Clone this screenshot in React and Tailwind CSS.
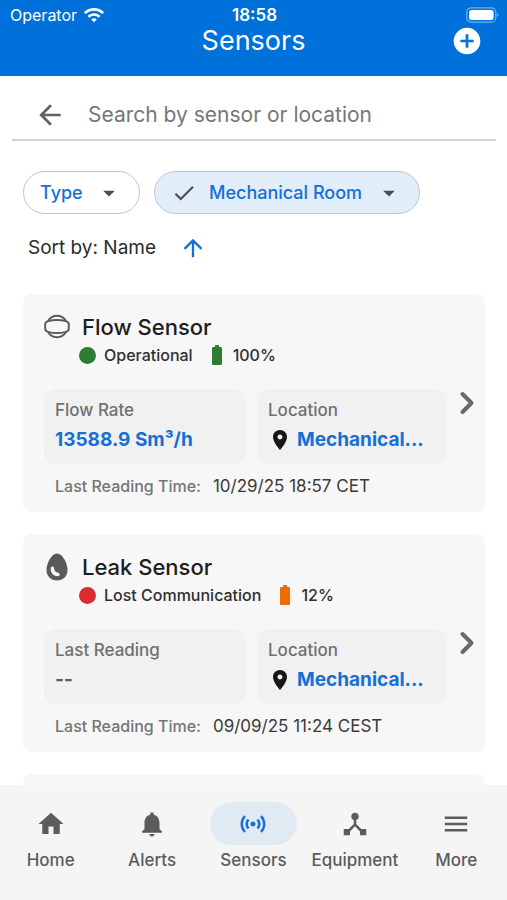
import React from "react";
import {
  MdAddCircle,
  MdArrowBack,
  MdArrowDropDown,
  MdArrowUpward,
  MdBatteryFull,
  MdCheck,
  MdDeviceHub,
  MdHome,
  MdLocationOn,
  MdMenu,
  MdNotifications,
  MdSensors,
  MdWifi,
} from "react-icons/md";

const sensors = [
  {
    name: "Flow Sensor",
    icon: FlowIcon,
    status: "Operational",
    dot: "bg-[#2e7d32]",
    battery: "100%",
    batteryColor: "text-[#2e7d32]",
    label: "Flow Rate",
    value: "13588.9 Sm³/h",
    valueColor: "text-[#1470d6]",
    location: "Mechanical...",
    time: "10/29/25 18:57 CET",
  },
  {
    name: "Leak Sensor",
    icon: LeakIcon,
    status: "Lost Communication",
    dot: "bg-[#d92d2f]",
    battery: "12%",
    batteryColor: "text-[#ef6c00]",
    label: "Last Reading",
    value: "--",
    valueColor: "text-[#5f5f5f]",
    location: "Mechanical...",
    time: "09/09/25 11:24 CEST",
  },
];

const tabs = [
  { name: "Home", icon: MdHome },
  { name: "Alerts", icon: MdNotifications },
  { name: "Sensors", icon: MdSensors, active: true },
  { name: "Equipment", icon: MdDeviceHub },
  { name: "More", icon: MdMenu },
];

function FlowIcon() {
  return (
    <svg viewBox="0 0 26 26" className="w-[26px] h-[26px] shrink-0" fill="none" stroke="#5a5a5a" strokeWidth="1.9">
      <path d="M4 7C6 3.600 9.200 1.800 13 1.800S20 3.600 22 7" />
      <path d="M4 18c2 3.400 5.200 5.200 9 5.200s7-1.800 9-5.200" />
      <path d="M4 7.200c6-1.600 12-1.600 18 0 1.700.5 2.800 1.600 2.800 3.300v4c0 1.700-1.100 2.800-2.800 3.300-6 1.600-12 1.600-18 0-1.700-.5-2.800-1.600-2.800-3.300v-4c0-1.700 1.100-2.800 2.800-3.300z" />
    </svg>
  );
}

function LeakIcon() {
  return (
    <svg viewBox="0 0 26 28" className="w-[26px] h-7 shrink-0">
      <path d="M13 .5C18.500 .5 23.500 10 23.500 17c0 6.200-4.300 10.500-10.500 10.500S2.500 23.200 2.500 17C2.500 10 7.500 .5 13 .5z" fill="#5a5a5a" />
      <path d="M7 14.200c.8-1 2.800-.7 3 .8.300 2.800 1.500 4.200 4.300 4.800 1.800.4 1.900 2.900.2 3.300C10 23.800 5.600 19.500 7 14.200z" fill="#f7f7f7" />
    </svg>
  );
}

function Chip({ label, selected }) {
  return (
    <label
      className={
        "flex items-center h-[43px] rounded-full border border-[#c3c3cc] px-4 " +
        (selected ? "bg-[#e1edf8]" : "bg-white")
      }
    >
      {selected && <MdCheck className="w-[26px] h-[26px] mr-3 text-[#4d4d4d]" />}
      <select
        aria-label={label}
        className="appearance-none bg-transparent text-[18px] leading-6 font-medium text-[#1470d6] outline-none"
      >
        <option>{label}</option>
      </select>
      <MdArrowDropDown className="w-7 h-7 ml-3 text-[#4d4d4d] pointer-events-none" />
    </label>
  );
}

function SensorCard({ sensor }) {
  const Icon = sensor.icon;
  return (
    <article className="flex items-center rounded-lg bg-[#f7f7f7] pl-[21px] pr-[7px]">
      <div className="flex-1 min-w-0 pt-4 pb-2">
        <div className="flex items-center gap-3 h-[34px]">
          <Icon />
          <h2 className="text-[22px] leading-8 font-medium text-[#1d1d1d]">{sensor.name}</h2>
        </div>
        <div className="flex items-center h-[22px] pl-[35px] text-base font-medium text-[#2f2f2f]">
          <span className={"w-[17px] h-[17px] rounded-full mr-2 " + sensor.dot} />
          <span>{sensor.status}</span>
          <MdBatteryFull className={"w-6 h-6 ml-3 mr-1 " + sensor.batteryColor} />
          <span>{sensor.battery}</span>
        </div>
        <div className="grid grid-cols-[202fr_190fr] gap-[11px] mt-[23px] mr-[9px]">
          <div className="rounded-xl bg-[#f1f1f1] h-[75px] px-[11px] pt-[7px]">
            <p className="text-[17px] leading-7 font-medium text-[#707070]">{sensor.label}</p>
            <p className={"text-[19px] leading-8 font-bold whitespace-nowrap " + sensor.valueColor}>
              {sensor.value}
            </p>
          </div>
          <div className="rounded-xl bg-[#f1f1f1] h-[75px] px-[11px] pt-[7px] min-w-0">
            <p className="text-[17px] leading-7 font-medium text-[#707070]">Location</p>
            <div className="flex items-center gap-[5px]">
              <MdLocationOn className="w-6 h-6 shrink-0 text-[#161616]" />
              <a href="#location" className="text-[19px] leading-8 font-bold whitespace-nowrap text-[#1470d6]">
                {sensor.location}
              </a>
            </div>
          </div>
        </div>
        <div className="flex items-center h-9 mt-1 pl-[11px] gap-3">
          <span className="text-base leading-6 font-medium text-[#757575]">Last Reading Time:</span>
          <span className="text-[17px] leading-6 text-[#3a3a3a]">{sensor.time}</span>
        </div>
      </div>
      <button aria-label={"Open " + sensor.name} className="w-[22px] h-8 shrink-0 flex items-center justify-center">
        <svg viewBox="0 0 16 24" className="w-4 h-6" fill="none" stroke="#6a6a6a" strokeWidth="4" strokeLinecap="round" strokeLinejoin="round">
          <path d="M3.500 3l9 9-9 9" />
        </svg>
      </button>
    </article>
  );
}

export default function App() {
  return (
    <div className="flex flex-col h-screen overflow-hidden bg-white font-['Inter',sans-serif]">
      <header className="bg-[#0070da] text-white pb-[22px]">
        <div className="grid grid-cols-3 items-center h-7 pt-[2px] pl-[10px] pr-2">
          <div className="flex items-center gap-[6px] text-base leading-5">
            <span>Operator</span>
            <MdWifi className="w-[22px] h-[22px]" />
          </div>
          <span className="text-center text-[17px] leading-5 font-semibold">18:58</span>
          <svg viewBox="0 0 33 16" className="w-[33px] h-4 justify-self-end">
            <rect x=".8" y=".8" width="29" height="14.400" rx="4.500" fill="none" stroke="#fff" strokeOpacity=".45" strokeWidth="1.200" />
            <rect x="3" y="3" width="24.600" height="10" rx="2.500" fill="#fff" />
            <path d="M31.200 6v4c1.600-.5 1.600-3.500 0-4z" fill="#fff" fillOpacity=".5" />
          </svg>
        </div>
        <div className="grid grid-cols-[1fr_auto_1fr] items-center h-[26px] pl-6 pr-6">
          <h1 className="col-start-2 text-[27px] leading-6">Sensors</h1>
          <button aria-label="Add sensor" className="justify-self-end -my-1">
            <MdAddCircle className="w-8 h-8" />
          </button>
        </div>
      </header>

      <main className="flex-1 min-h-0 overflow-hidden">
        <div className="flex items-center h-[65px] ml-3 mr-[11px] pt-[14px] pl-[22px] border-b-2 border-[#d2d2d2]">
          <button aria-label="Back">
            <MdArrowBack className="w-8 h-8 text-[#5f6164]" />
          </button>
          <input
            type="search"
            aria-label="Search by sensor or location"
            placeholder="Search by sensor or location"
            className="flex-1 min-w-0 ml-[22px] text-[21px] leading-8 text-[#333] placeholder:text-[#75777a] outline-none"
          />
        </div>

        <div className="flex gap-[14px] mt-[30px] px-[23px]">
          <Chip label="Type" />
          <Chip label="Mechanical Room" selected />
        </div>

        <div className="flex items-center gap-[23px] h-8 mt-[18px] pl-7">
          <span className="text-[19px] leading-8 text-[#2b2b2b]">Sort by: Name</span>
          <button aria-label="Sort ascending">
            <MdArrowUpward className="w-7 h-7 text-[#1470d6]" />
          </button>
        </div>

        <div className="flex flex-col gap-[22px] mt-[30px] pl-[23px] pr-[22px]">
          {sensors.map(sensor => (
            <SensorCard key={sensor.name} sensor={sensor} />
          ))}
          <div className="h-20 rounded-lg bg-[#f7f7f7]" />
        </div>
      </main>

      <nav className="grid grid-cols-5 shrink-0 h-[115px] pt-[17px] bg-[#f5f5f5]">
        {tabs.map(tab => {
          const Icon = tab.icon;
          return (
            <a key={tab.name} href={"#" + tab.name.toLowerCase()} className="flex flex-col items-center text-[#5c5c5c]">
              <span
                className={
                  "flex items-center justify-center w-[87px] h-[43px] rounded-full " +
                  (tab.active ? "bg-[#e1e9f2] text-[#1470d6]" : "")
                }
              >
                <Icon className="w-[30px] h-[30px]" />
              </span>
              <span className="mt-[3px] text-[17px] leading-6 font-medium">{tab.name}</span>
            </a>
          );
        })}
      </nav>
    </div>
  );
}
